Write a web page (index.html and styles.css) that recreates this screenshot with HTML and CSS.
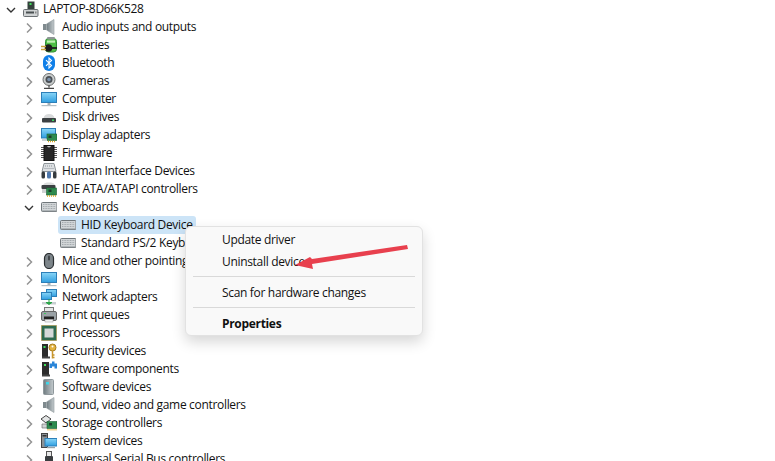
FILE: index.html
```html
<!DOCTYPE html>
<html lang="en">
<head>
<meta charset="utf-8">
<title>Device Manager</title>
<link rel="stylesheet" href="styles.css">
</head>
<body>
<svg class="defs" width="0" height="0" aria-hidden="true">
  <defs>
    <linearGradient id="scr" x1="0" y1="0" x2="0" y2="1"><stop offset="0" stop-color="#8ad6f7"/><stop offset="1" stop-color="#2f9ee0"/></linearGradient>
    <linearGradient id="metal" x1="0" y1="0" x2="1" y2="0"><stop offset="0" stop-color="#6f7b80"/><stop offset="1" stop-color="#c4cbce"/></linearGradient>
    <symbol id="i-chev-r" viewBox="0 0 10 10"><path d="M3 .5L7.500 5 3 9.500" fill="none" stroke="#949494" stroke-width="1.500"/></symbol>
    <symbol id="i-chev-d" viewBox="0 0 10 10"><path d="M1 3l4 4 4-4" fill="none" stroke="#333" stroke-width="1.400"/></symbol>
    <symbol id="i-root" viewBox="0 0 16 16"><rect x="4.500" y="0.500" width="7" height="9" fill="#34423c"/><rect x="6.500" y="2" width="2" height="2" fill="#3fdc5a"/><rect x="0.500" y="8.500" width="14.500" height="7" rx="1" fill="#cfd2d3" stroke="#6a6f72"/><rect x="3" y="10.500" width="8" height="2" fill="#4a5052"/><rect x="12" y="10.500" width="1.500" height="2" fill="#888"/></symbol>
    <symbol id="i-speaker" viewBox="0 0 16 16"><path d="M2 5h3v6H2z" fill="#7f8a8e"/><path d="M5.500 5L13 0.500v15L5.500 11z" fill="url(#metal)" stroke="#8f989c" stroke-width=".6"/></symbol>
    <symbol id="i-battery" viewBox="0 0 16 16"><rect x="4.500" y="1.500" width="11" height="13.500" rx="3" fill="#4fbf45" stroke="#2f8a36"/><rect x="6" y="0" width="8" height="2.500" rx="1" fill="#8f9696"/><rect x="6" y="3.500" width="8" height="2.200" fill="#bff0b2"/><circle cx="7.500" cy="11" r="3.800" fill="#1d1d1d"/><path d="M0 9.500h5M0 12.500h5" stroke="#c8a23c" stroke-width="1.300"/><path d="M10 11h6" stroke="#1d1d1d" stroke-width="1.800"/></symbol>
    <symbol id="i-bt" viewBox="0 0 16 16"><rect x="2" y="0" width="12" height="16" rx="6" fill="#0f7fe8"/><path d="M5 5.200l5.500 5.400L8 13V3l2.500 2.400L5 10.800" fill="none" stroke="#fff" stroke-width="1.100"/></symbol>
    <symbol id="i-cam" viewBox="0 0 16 16"><circle cx="8" cy="6.500" r="6" fill="#c9cdcd" stroke="#6d6f6f"/><circle cx="8" cy="6.500" r="3.500" fill="#4a4f55"/><circle cx="8" cy="6.500" r="1.800" fill="#7b93ad"/><path d="M8 12.500v2M3 15.300h10" stroke="#444" stroke-width="1.300"/></symbol>
    <symbol id="i-monitor" viewBox="0 0 16 16"><rect x="0.500" y="1.500" width="15" height="10" fill="url(#scr)" stroke="#2d7fb8"/><rect x="6.500" y="12" width="3" height="2" fill="#a8b0b5"/><rect x="0.500" y="14" width="15" height="1.200" fill="#b5c0c6"/></symbol>
    <symbol id="i-disk" viewBox="0 0 16 16"><path d="M2.500 9Q3.500 5 8 5t5.500 4z" fill="#d8dadb"/><rect x="1" y="9" width="14" height="4.500" rx="1" fill="#3c4043"/><rect x="11" y="10.500" width="2" height="1.500" fill="#38d860"/></symbol>
    <symbol id="i-display" viewBox="0 0 16 16"><rect x="0.500" y="1.500" width="14" height="9.500" fill="url(#scr)" stroke="#2d7fb8"/><rect x="6" y="7" width="10" height="6.500" fill="#2d8a4e" stroke="#1c5f33" stroke-width=".6"/><rect x="7.500" y="8.500" width="3" height="2.500" fill="#1e3a2a"/><path d="M7 14.500h8" stroke="#d9a520" stroke-width="1.600" stroke-dasharray="1 1"/><path d="M1 13h4" stroke="#9aa3a8"/></symbol>
    <symbol id="i-chip" viewBox="0 0 16 16"><rect x="3" y="0.500" width="10" height="15" fill="#262626"/><path d="M1.500 2v12M14.500 2v12" stroke="#555" stroke-width="3" stroke-dasharray="1 1"/><path d="M6 0.500a2 2 0 0 0 4 0z" fill="#bbb"/><rect x="3" y="0.500" width="10" height="15" fill="none" stroke="#111"/></symbol>
    <symbol id="i-hid" viewBox="0 0 16 16"><path d="M3 0.500h10l2 8H1z" fill="#dde0e3" stroke="#8d9498"/><path d="M4 3h8M3.500 5.500h9" stroke="#8f979c" stroke-dasharray="1 1"/><rect x="0.500" y="8.500" width="3.500" height="7" rx="1.500" fill="#353b3f"/><rect x="6" y="8.500" width="4" height="7" rx="1.500" fill="#4f78ad"/><rect x="12" y="8.500" width="3.500" height="7" rx="1.500" fill="#353b3f"/></symbol>
    <symbol id="i-ide" viewBox="0 0 16 16"><path d="M2 4Q3 1.500 6 1.500h4q3 0 4 2.500z" fill="#dcdede"/><rect x="0.500" y="4" width="14" height="4" rx="1" fill="#3c4043"/><rect x="1" y="8" width="4" height="4" fill="#d0d2d3"/><rect x="5.500" y="7" width="10" height="7" fill="#2d8a4e" stroke="#1c5f33" stroke-width=".6"/><rect x="7.500" y="8.500" width="3" height="2.500" fill="#1e3a2a"/><path d="M6 15h9" stroke="#d9a520" stroke-width="1.600" stroke-dasharray="1 1"/></symbol>
    <symbol id="i-kbd" viewBox="0 0 16 16"><rect x="0.500" y="3.500" width="15.500" height="9" rx="1" fill="#d2d6d8" stroke="#70777b"/><path d="M2 5.500h12.500M2 7.500h12.500M2 9.500h12.500" stroke="#a3a9ad" stroke-dasharray="1 .6"/><path d="M1 12h14.500" stroke="#8b9296"/></symbol>
    <symbol id="i-mouse" viewBox="0 0 16 16"><rect x="3.500" y="0.500" width="9" height="15" rx="4.500" fill="#7d858a" stroke="#2a2e31" stroke-width="1.200"/><rect x="7" y="2.500" width="2" height="5" rx="1" fill="#42474b"/></symbol>
    <symbol id="i-net" viewBox="0 0 16 16"><rect x="5.500" y="0.500" width="10" height="7" fill="url(#scr)" stroke="#2d7fb8"/><rect x="0.500" y="3.500" width="10" height="7" fill="url(#scr)" stroke="#2d7fb8"/><rect x="1" y="13" width="14" height="2.500" fill="#c9cfd2"/><path d="M8 10v3M5 13.500l3 2 3-2z" stroke="#2ca64a" fill="#2ca64a"/></symbol>
    <symbol id="i-print" viewBox="0 0 16 16"><rect x="3.500" y="0.500" width="9" height="4" fill="#e4e6e6" stroke="#777"/><rect x="0.500" y="4.500" width="15" height="9" rx="1.500" fill="#9aa2a6" stroke="#666"/><rect x="3" y="6" width="2" height="1" fill="#3ec45b"/><rect x="3" y="9.500" width="10" height="3" fill="#222"/><rect x="4" y="12.500" width="8" height="2.500" fill="#f4f4f4" stroke="#999" stroke-width=".5"/></symbol>
    <symbol id="i-cpu" viewBox="0 0 16 16"><rect x="0.500" y="0.500" width="15" height="15" fill="#2f6b50" stroke="#b08a2c" stroke-dasharray="1 1"/><rect x="1.500" y="1.500" width="13" height="13" fill="#2f6b50"/><rect x="3.500" y="3.500" width="9" height="9" fill="#d4d8d8"/></symbol>
    <symbol id="i-sec" viewBox="0 0 16 16"><rect x="1" y="1" width="6" height="14" fill="#2c2c2c"/><rect x="2.500" y="3" width="2" height="2" fill="#3fe05c"/><rect x="1" y="13.500" width="8" height="2" fill="#444"/><circle cx="11.500" cy="4.500" r="3.500" fill="#e3b341" stroke="#a77d1f"/><circle cx="11.500" cy="3.500" r="1" fill="#fff"/><path d="M11.500 8v7.500M11.500 12h2M11.500 14.500h2" stroke="#c7952c" stroke-width="1.500"/></symbol>
    <symbol id="i-comp" viewBox="0 0 16 16"><rect x="1" y="1" width="7" height="14" fill="#2c2c2c"/><rect x="3" y="3" width="2" height="2" fill="#3fe05c"/><rect x="1" y="13.500" width="8" height="2" fill="#444"/><path d="M8.500 2.500h2.500V0.500h2.500v2h2.500v5h-2.500v-2h-2.500v1.500h-2.500z" fill="#2a85d8"/></symbol>
    <symbol id="i-swdev" viewBox="0 0 16 16"><rect x="2.500" y="0.500" width="10" height="15" rx="1" fill="url(#metal)" stroke="#8f989c"/><rect x="5" y="3" width="3" height="2.500" fill="#3fd6e8"/></symbol>
    <symbol id="i-storage" viewBox="0 0 16 16"><path d="M5 0.500L10 4l-5 4-5-4z" fill="#e3e5e5" stroke="#333" stroke-width=".9"/><path d="M1 9h6v4H1z" fill="#cfd2d3" stroke="#777" stroke-width=".7"/><rect x="6" y="6.500" width="10" height="7" fill="#2d8a4e" stroke="#1c5f33" stroke-width=".6"/><rect x="8" y="8" width="3" height="2.500" fill="#1e3a2a"/><path d="M6.500 14.800h9" stroke="#d9a520" stroke-width="1.600" stroke-dasharray="1 1"/></symbol>
    <symbol id="i-system" viewBox="0 0 16 16"><rect x="0.500" y="0.500" width="6" height="14" fill="#8b9296" stroke="#444"/><rect x="1.500" y="2" width="4" height="1.500" fill="#333"/><rect x="4" y="5.500" width="12" height="7.500" fill="url(#scr)" stroke="#2d7fb8"/><rect x="6" y="14" width="8" height="1.200" fill="#9aa3a8"/></symbol>
    <symbol id="i-usb" viewBox="0 0 16 16"><rect x="5.500" y="0.500" width="5" height="5" fill="#e8e8e8" stroke="#555"/><rect x="4" y="5" width="8" height="11" rx="1" fill="#3a3d40"/></symbol>
  </defs>
</svg>

<div class="page">
  <div class="row root">
    <svg class="chev"><use href="#i-chev-d"/></svg>
    <svg class="icon"><use href="#i-root"/></svg>
    <span class="label">LAPTOP-8D66K528</span>
  </div>
  <div class="row"><svg class="chev"><use href="#i-chev-r"/></svg><svg class="icon"><use href="#i-speaker"/></svg><span class="label">Audio inputs and outputs</span></div>
  <div class="row"><svg class="chev"><use href="#i-chev-r"/></svg><svg class="icon"><use href="#i-battery"/></svg><span class="label">Batteries</span></div>
  <div class="row"><svg class="chev"><use href="#i-chev-r"/></svg><svg class="icon"><use href="#i-bt"/></svg><span class="label">Bluetooth</span></div>
  <div class="row"><svg class="chev"><use href="#i-chev-r"/></svg><svg class="icon"><use href="#i-cam"/></svg><span class="label">Cameras</span></div>
  <div class="row"><svg class="chev"><use href="#i-chev-r"/></svg><svg class="icon"><use href="#i-monitor"/></svg><span class="label">Computer</span></div>
  <div class="row"><svg class="chev"><use href="#i-chev-r"/></svg><svg class="icon"><use href="#i-disk"/></svg><span class="label">Disk drives</span></div>
  <div class="row"><svg class="chev"><use href="#i-chev-r"/></svg><svg class="icon"><use href="#i-display"/></svg><span class="label">Display adapters</span></div>
  <div class="row"><svg class="chev"><use href="#i-chev-r"/></svg><svg class="icon"><use href="#i-chip"/></svg><span class="label">Firmware</span></div>
  <div class="row"><svg class="chev"><use href="#i-chev-r"/></svg><svg class="icon"><use href="#i-hid"/></svg><span class="label">Human Interface Devices</span></div>
  <div class="row"><svg class="chev"><use href="#i-chev-r"/></svg><svg class="icon"><use href="#i-ide"/></svg><span class="label">IDE ATA/ATAPI controllers</span></div>
  <div class="row"><svg class="chev"><use href="#i-chev-d"/></svg><svg class="icon"><use href="#i-kbd"/></svg><span class="label">Keyboards</span></div>
  <div class="row leaf selected"><svg class="icon"><use href="#i-kbd"/></svg><span class="label">HID Keyboard Device</span></div>
  <div class="row leaf"><svg class="icon"><use href="#i-kbd"/></svg><span class="label">Standard PS/2 Keyboard</span></div>
  <div class="row"><svg class="chev"><use href="#i-chev-r"/></svg><svg class="icon"><use href="#i-mouse"/></svg><span class="label">Mice and other pointing devices</span></div>
  <div class="row"><svg class="chev"><use href="#i-chev-r"/></svg><svg class="icon"><use href="#i-monitor"/></svg><span class="label">Monitors</span></div>
  <div class="row"><svg class="chev"><use href="#i-chev-r"/></svg><svg class="icon"><use href="#i-net"/></svg><span class="label">Network adapters</span></div>
  <div class="row"><svg class="chev"><use href="#i-chev-r"/></svg><svg class="icon"><use href="#i-print"/></svg><span class="label">Print queues</span></div>
  <div class="row"><svg class="chev"><use href="#i-chev-r"/></svg><svg class="icon"><use href="#i-cpu"/></svg><span class="label">Processors</span></div>
  <div class="row"><svg class="chev"><use href="#i-chev-r"/></svg><svg class="icon"><use href="#i-sec"/></svg><span class="label">Security devices</span></div>
  <div class="row"><svg class="chev"><use href="#i-chev-r"/></svg><svg class="icon"><use href="#i-comp"/></svg><span class="label">Software components</span></div>
  <div class="row"><svg class="chev"><use href="#i-chev-r"/></svg><svg class="icon"><use href="#i-swdev"/></svg><span class="label">Software devices</span></div>
  <div class="row"><svg class="chev"><use href="#i-chev-r"/></svg><svg class="icon"><use href="#i-speaker"/></svg><span class="label">Sound, video and game controllers</span></div>
  <div class="row"><svg class="chev"><use href="#i-chev-r"/></svg><svg class="icon"><use href="#i-storage"/></svg><span class="label">Storage controllers</span></div>
  <div class="row"><svg class="chev"><use href="#i-chev-r"/></svg><svg class="icon"><use href="#i-system"/></svg><span class="label">System devices</span></div>
  <div class="row"><svg class="chev"><use href="#i-chev-r"/></svg><svg class="icon"><use href="#i-usb"/></svg><span class="label">Universal Serial Bus controllers</span></div>

  <div class="menu">
    <div class="item">Update driver</div>
    <div class="item">Uninstall device</div>
    <div class="sep"></div>
    <div class="item">Scan for hardware changes</div>
    <div class="sep"></div>
    <div class="item bold">Properties</div>
  </div>

  <svg class="arrow" width="120" height="30" viewBox="0 0 120 30" aria-hidden="true">
    <path d="M116 4L21 18l-2-2L4 24l18 4-1-5 96-15z" fill="#e8404e"/>
  </svg>
</div>
</body>
</html>
```

FILE: styles.css
```css
* { box-sizing: border-box; }
html, body { margin: 0; padding: 0; background: #fff; }
.defs { position: absolute; }
.page {
  position: relative;
  width: 775px;
  height: 461px;
  overflow: hidden;
  font-family: "Open Sans", "Liberation Sans", sans-serif;
  font-size: 12px;
  letter-spacing: -0.32px;
  color: #111;
}
.row {
  display: flex;
  align-items: center;
  height: 18px;
  padding-left: 24px;
  white-space: nowrap;
}
.row.root { padding-left: 6px; }
.row.root .icon { margin-right: 4px; }
.row.leaf { padding-left: 60px; position: relative; }
.chev { width: 10px; height: 10px; flex: none; margin-right: 7px; margin-top: 2px; }
.icon { width: 16px; height: 16px; flex: none; margin-right: 5px; }
.label { margin-bottom: 2px; }
.selected { z-index: 0; }
.selected::before {
  content: "";
  position: absolute;
  z-index: -1;
  left: 58px;
  top: 0;
  width: 138px;
  height: 18px;
  border-radius: 3px;
  background: #cce4f7;
}
.menu {
  position: absolute;
  left: 185px;
  top: 226px;
  width: 238px;
  height: 110px;
  padding: 1px 7px;
  background: #f9f9f9;
  border: 1px solid #e2e2e2;
  border-radius: 6px;
  box-shadow: 0 6px 14px rgba(0, 0, 0, 0.16);
}
.item {
  height: 22px;
  line-height: 23px;
  padding-left: 29px;
  white-space: nowrap;
}
.item.bold { font-weight: 700; }
.sep { height: 1px; margin: 4px 0; background: #d9d9d9; }
.arrow { position: absolute; left: 291px; top: 241px; }
```
